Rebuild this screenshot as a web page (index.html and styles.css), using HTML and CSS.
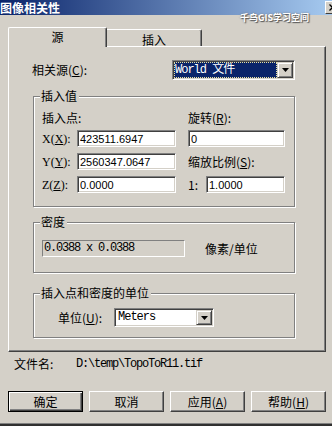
FILE: index.html
```html
<!DOCTYPE html>
<html lang="zh-CN">
<head>
<meta charset="UTF-8">
<link rel="stylesheet" href="styles.css">
<title>图像相关性</title>
</head>
<body>
  <div class="titlebar">
    <span class="title">图像相关性</span>
    <span class="close-btn"><svg width="8" height="7" viewBox="0 0 8 7"><path d="M0.5 0.5l6 6M6.5 0.5l-6 6" stroke="#000" stroke-width="1.3" fill="none"/></svg></span>
  </div>
  <div class="watermark">千鸟GIS学习空间</div>

  <div class="dialog">
    <div class="tabs">
      <div class="tab active">源</div>
      <div class="tab">插入</div>
    </div>

    <div class="panel">
      <div class="source-row">
        <span class="source-label">相关源(<u>C</u>):</span>
        <div class="combo source-combo">
          <span class="combo-text selected">World 文件</span>
          <span class="combo-btn"><svg width="7" height="4" viewBox="0 0 7 4"><path d="M0 0h7L3.5 4z" fill="#000"/></svg></span>
        </div>
      </div>

      <div class="group group-insert">
        <div class="group-title">插入值</div>
        <div class="insert-grid">
          <span class="span2">插入点:</span>
          <span class="col4 span2">旋转(<u>R</u>):</span>

          <span class="axis">X(<u>X</u>):</span>
          <input class="field" type="text" value="423511.6947">
          <input class="field col4 span2" type="text" value="0">

          <span class="axis">Y(<u>Y</u>):</span>
          <input class="field" type="text" value="2560347.0647">
          <span class="col4 span2">缩放比例(<u>S</u>):</span>

          <span class="axis">Z(<u>Z</u>):</span>
          <input class="field" type="text" value="0.0000">
          <span class="col4">1:</span>
          <input class="field" type="text" value="1.0000">
        </div>
      </div>

      <div class="group group-density">
        <div class="group-title">密度</div>
        <div class="density-row">
          <div class="readonly-field">0.0388 x 0.0388</div>
          <span class="density-unit">像素/单位</span>
        </div>
      </div>

      <div class="group group-units">
        <div class="group-title">插入点和密度的单位</div>
        <div class="units-row">
          <span class="units-label">单位(<u>U</u>):</span>
          <div class="combo units-combo">
            <span class="combo-text">Meters</span>
            <span class="combo-btn"><svg width="7" height="4" viewBox="0 0 7 4"><path d="M0 0h7L3.5 4z" fill="#000"/></svg></span>
          </div>
        </div>
      </div>
    </div>

    <div class="file-row">
      <span class="file-label">文件名:</span>
      <span class="file-path">D:\temp\TopoToR11.tif</span>
    </div>

    <div class="buttons">
      <button class="btn default">确定</button>
      <button class="btn">取消</button>
      <button class="btn">应用(<u>A</u>)</button>
      <button class="btn">帮助(<u>H</u>)</button>
    </div>
  </div>
  <div class="bottom-edge"></div>
</body>
</html>
```

FILE: styles.css
```css
body {
  margin: 0;
  width: 332px;
  height: 426px;
  overflow: hidden;
  position: relative;
  background-color: #d4d0c8;
  color: #000;
  font-family: "Noto Sans CJK SC", sans-serif;
  font-size: 12px;
  line-height: 14px;
}

u {
  text-decoration: underline;
}

/* barra de titulo */
.titlebar {
  height: 15px;
  display: flex;
  justify-content: space-between;
  background: linear-gradient(to right, #0a246a, #a6caf0);
}

.title {
  color: #fff;
  font-weight: bold;
  font-size: 12px;
  line-height: 15px;
}

.close-btn {
  box-sizing: border-box;
  width: 16px;
  height: 13px;
  margin: 1px -9px 0 0;
  display: flex;
  align-items: center;
  justify-content: center;
  background-color: #d4d0c8;
  border: 1px solid;
  border-color: #fff #404040 #404040 #fff;
}

.watermark {
  position: absolute;
  left: 240px;
  top: 12px;
  color: #fff;
  font-size: 9px;
  font-weight: bold;
  line-height: 11px;
  text-shadow: 1px 1px 1px #555, 0 0 2px #777;
}

.dialog {
  padding-left: 8px;
}

/* abas */
.tabs {
  display: flex;
  align-items: flex-end;
  height: 19px;
  margin-top: 12px;
}

.tab {
  box-sizing: border-box;
  width: 95px;
  height: 17px;
  border-top: 1px solid #fff;
  border-right: 1px solid #404040;
  box-shadow: inset -1px 0 #808080;
  border-radius: 0 2px 0 0;
  text-align: center;
  line-height: 20px;
}

.tab.active {
  position: relative;
  z-index: 1;
  width: 99px;
  height: 20px;
  margin-bottom: -1px;
  border-left: 1px solid #fff;
  border-radius: 2px 2px 0 0;
  background-color: #d4d0c8;
  line-height: 17px;
}

.panel {
  box-sizing: border-box;
  width: 318px;
  height: 306px;
  border: 1px solid;
  border-color: #fff #404040 #404040 #fff;
  box-shadow: inset -1px -1px #808080;
}

.source-row {
  display: flex;
  align-items: center;
  margin-top: 13px;
  padding-left: 23px;
}

.source-label {
  width: 140px;
}

/* combos */
.combo {
  box-sizing: border-box;
  display: flex;
  padding: 0;
  border: 1px solid;
  border-color: #808080 #fff #fff #808080;
  box-shadow: inset 1px 1px #404040, inset -1px -1px #d4d0c8;
  background-color: #fff;
}

.source-combo {
  width: 123px;
  height: 20px;
  padding: 1px;
}

.units-combo {
  width: 100px;
  height: 19px;
  padding: 1px;
}

.combo-text {
  flex: 1;
  padding-left: 2px;
  font-family: "Liberation Mono", "Noto Sans CJK SC", monospace;
  font-size: 12px;
  letter-spacing: -1px;
  line-height: 16px;
}

.combo-text.selected {
  background-color: #0a246a;
  color: #fff;
  outline: 1px dotted #e8e0a0;
  outline-offset: -1px;
  padding-left: 1px;
}

.combo-btn {
  box-sizing: border-box;
  width: 16px;
  display: flex;
  align-items: center;
  justify-content: center;
  background-color: #d4d0c8;
  border: 1px solid;
  border-color: #d4d0c8 #404040 #404040 #d4d0c8;
  box-shadow: inset 1px 1px #fff, inset -1px -1px #808080;
}

/* caixas de grupo */
.group {
  box-sizing: border-box;
  width: 262px;
  margin-left: 24px;
  border: 1px solid #808080;
  box-shadow: inset 1px 1px #fff, 1px 1px #fff;
}

.group-insert {
  height: 111px;
  margin-top: 16px;
}

.group-density {
  height: 51px;
  margin-top: 15px;
}

.group-units {
  height: 45px;
  margin-top: 20px;
}

.group-title {
  display: table;
  margin: -8px 0 0 6px;
  padding: 0 2px 0 1px;
  background-color: #d4d0c8;
  line-height: 14px;
}

.insert-grid {
  display: grid;
  grid-template-columns: 35px 99px 12px 18px 79px;
  grid-template-rows: 12px 17px 17px 17px;
  row-gap: 6px;
  align-items: center;
  margin: 9px 0 0 8px;
}

.col4 {
  grid-column-start: 4;
}

.span2 {
  grid-column-end: span 2;
}

.insert-grid .col4.span2 {
  grid-column: 4 / span 2;
}

.insert-grid span:not(.axis) {
  line-height: 12px;
}

.axis {
  font-family: "Liberation Serif", "Noto Sans CJK SC", serif;
}

.field {
  box-sizing: border-box;
  height: 17px;
  margin: 0;
  padding: 0 0 0 2px;
  border: 1px solid;
  border-color: #808080 #fff #fff #808080;
  box-shadow: inset 1px 1px #404040, inset -1px -1px #d4d0c8;
  background-color: #fff;
  font-family: "Liberation Sans", sans-serif;
  font-size: 11px;
  color: #000;
  outline: none;
}

.density-row {
  display: flex;
  align-items: center;
  margin: 11px 0 0 8px;
}

.readonly-field {
  box-sizing: border-box;
  width: 143px;
  height: 17px;
  padding-left: 1px;
  border: 1px solid;
  border-color: #808080 #fff #fff #808080;
  font-family: "Liberation Mono", monospace;
  font-size: 12px;
  letter-spacing: -1.2px;
  line-height: 15px;
}

.density-unit {
  margin-left: 20px;
}

.units-row {
  display: flex;
  align-items: center;
  margin: 8px 0 0 24px;
}

.units-label {
  width: 56px;
}

.units-combo .combo-text {
  line-height: 15px;
}

/* nome do arquivo */
.file-row {
  display: flex;
  margin-top: 5px;
  padding-left: 6px;
}

.file-label {
  width: 62px;
}

.file-path {
  font-family: "Liberation Mono", monospace;
  font-size: 12px;
  letter-spacing: -1.2px;
}

/* botoes */
.buttons {
  display: flex;
  gap: 6px;
  margin-top: 20px;
}

.btn {
  box-sizing: border-box;
  width: 75px;
  height: 21px;
  margin: 0;
  padding: 0;
  border: 1px solid;
  border-color: #fff #404040 #404040 #fff;
  box-shadow: inset -1px -1px #808080;
  background-color: #d4d0c8;
  font-family: "Noto Sans CJK SC", sans-serif;
  font-size: 12px;
  color: #000;
}

.btn.default {
  border: 1px solid #000;
  box-shadow: inset 1px 1px #fff, inset -1px -1px #404040, inset -2px -2px #808080;
}

.bottom-edge {
  margin-top: 11px;
  height: 4px;
  border-top: 1px solid #808080;
  background-color: #303030;
}
```
